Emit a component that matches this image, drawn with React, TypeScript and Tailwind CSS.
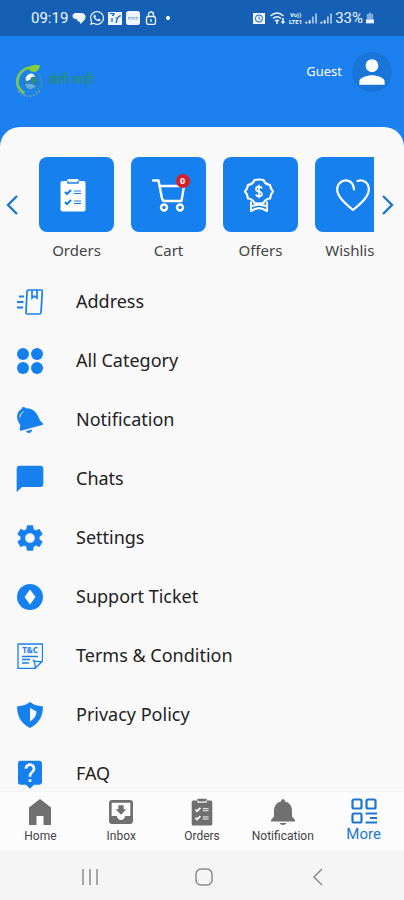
import type React from "react"
import { FaWhatsapp } from "react-icons/fa"
import { MdChatBubble, MdLiveHelp, MdMoveToInbox, MdPerson, MdSettings } from "react-icons/md"

type IconProps = { className?: string }

function ClipboardIcon({ className, mark }: IconProps & { mark: string }) {
  return (
    <svg viewBox="0 0 26 34" className={className} fill="currentColor" aria-hidden="true">
      <path d="M2.500 3H7V2.500Q7 1 9 1h8q2 0 2 1.500V3h4.500Q25.500 3 25.500 5v26.500q0 2-2 2h-21q-2 0-2-2V5q0-2 2-2z" />
      <path d="M8 3v2h10V3" fill="none" stroke={mark} strokeWidth="1.400" />
      <path d="M5 14l2 2 4-4M5 24l2 2 4-4" fill="none" stroke={mark} strokeWidth="2.200" />
      <path d="M14 13h7M14 15.500h7M14 23h7M14 25.500h7" stroke={mark} strokeWidth="1.200" />
    </svg>
  )
}

function CartIcon({ className }: IconProps) {
  return (
    <svg viewBox="0 0 34 34" className={className} fill="none" stroke="currentColor" strokeWidth="2.400" aria-hidden="true">
      <path d="M1 2.500h5.500L10 20.500q.4 2.500 3 2.500h16M8 8h24l-2.500 15H12" strokeLinecap="round" strokeLinejoin="round" />
      <circle cx="12" cy="29.500" r="3" />
      <circle cx="28" cy="29.500" r="3" />
    </svg>
  )
}

function OfferIcon({ className }: IconProps) {
  return (
    <svg viewBox="0 0 30 34" className={className} fill="none" stroke="currentColor" strokeWidth="2.200" strokeLinejoin="round" aria-hidden="true">
      <path d="M10.500 2Q15 1 19.500 2q1.800 4.400 6.500 5 .6 4 3 6.500-2.400 2.500-3 7-4.700.4-6.500 4.500-4.500 1-9 0-1.800-4.100-6.500-4.500-.6-4.500-3-7 2.400-2.500 3-6.500 4.700-.6 6.500-5z" />
      <path d="M7 23.500V33l4-2 4-1 4 1 4 2v-9.500M8 28l7-1.500 7 1.500" strokeWidth="2" />
      <path d="M18 10.500q-.7-1.800-3-1.800-3 0-3 2.300 0 2 3 2.500t3 2.600q0 2.300-3 2.300-2.500 0-3.200-2M15 6.800v13.500" strokeWidth="1.700" />
    </svg>
  )
}

function WishIcon({ className }: IconProps) {
  return (
    <svg viewBox="0 0 34 32" className={className} fill="none" stroke="currentColor" strokeWidth="2.200" strokeLinecap="round" strokeLinejoin="round" aria-hidden="true">
      <path d="M18 10.500Q17.500 4.500 13.500 2.300C8-.5 1.200 3.500 1.200 10.500 1.200 17 7.500 23 17 31c9.500-8 15.800-14 15.800-20.500C32.800 3.500 27 .2 21.500 2" />
    </svg>
  )
}

function AddressIcon({ className }: IconProps) {
  return (
    <svg viewBox="0 0 26 26" className={className} fill="none" stroke="currentColor" strokeWidth="1.700" aria-hidden="true">
      <path d="M11.500 1H24q1.500 0 1.300 1.500L24 23.500Q23.800 25 22.300 25H10.500Q9 25 9 23.500L10 2.500Q10 1 11.500 1z" />
      <path d="M15 1v8l2.500-2L20 9V1" />
      <path d="M2 7.500h5M0 13h6.500M0 18.500h6" strokeWidth="2" />
    </svg>
  )
}

function CategoryIcon({ className }: IconProps) {
  return (
    <svg viewBox="0 0 26 26" className={className} fill="currentColor" aria-hidden="true">
      <circle cx="6" cy="6" r="6" />
      <circle cx="20" cy="6" r="6" />
      <circle cx="6" cy="20" r="6" />
      <circle cx="20" cy="20" r="6" />
    </svg>
  )
}

function TiltedBellIcon({ className }: IconProps) {
  return (
    <svg viewBox="0 0 26 26" className={className} fill="currentColor" aria-hidden="true">
      <path d="M4.500 2Q4.800 0 6.500 0 8 0 8.700 1.200 16 1.200 19.500 6.500 21.500 9.500 23 13.500L26 16.500q.2 1.200-.8 1.600L4 23.800q-1.600.2-1.300-1.500L3.300 18Q-.5 13 .1 9 .8 4.200 4.500 2z" />
      <path d="M9 24l6-1.600q-.2 3.300-3 3.500-2.200.2-3-1.900z" />
      <path d="M2.800 10.500Q3 6.500 6.500 4.500" fill="none" stroke="white" strokeWidth=".9" />
    </svg>
  )
}

function TicketIcon({ className }: IconProps) {
  return (
    <svg viewBox="0 0 26 26" className={className} aria-hidden="true">
      <circle cx="13" cy="13" r="13" fill="currentColor" />
      <path d="M13 5.500l5.500 7.500-5.500 7.500L7.500 13z" fill="white" />
    </svg>
  )
}

function TermsIcon({ className }: IconProps) {
  return (
    <svg viewBox="0 0 26 26" className={className} fill="none" stroke="currentColor" strokeWidth="1.300" aria-hidden="true">
      <path d="M1 1h24.500v17l-7.500 7.500H1zM25.500 18q-4 1.500-9-.5 2.500 4 1.500 8" />
      <path d="M5 13.500h16M5 16.500h8M5 20h7" />
      <text x="13" y="10" textAnchor="middle" fill="currentColor" stroke="none" fontSize="8" fontWeight="700" fontFamily="Noto Sans, sans-serif">T&amp;C</text>
    </svg>
  )
}

function ShieldIcon({ className }: IconProps) {
  return (
    <svg viewBox="0 0 26 26" className={className} aria-hidden="true">
      <path d="M13 0q4 3.500 13 4.500 0 15-13 21.500Q0 19.500 0 4.500 9 3.500 13 0z" fill="currentColor" />
      <path d="M13 6l6.500 3.500q0 6-6.500 10z" fill="white" />
    </svg>
  )
}

function HomeIcon({ className }: IconProps) {
  return (
    <svg viewBox="0 0 24 26" className={className} fill="currentColor" aria-hidden="true">
      <path d="M12 0l11 8.500V26h-7.500v-9h-7v9H1V8.500z" />
    </svg>
  )
}

function BellIcon({ className }: IconProps) {
  return (
    <svg viewBox="0 0 24 26" className={className} fill="currentColor" aria-hidden="true">
      <path d="M10 2.500Q10 0 12 0t2 2.500Q20.500 4 21 11v6.500L24 21v1.500H0V21l3-3.500V11q.5-7 7-8.500z" />
      <path d="M8.500 24h7q-1 2-3.500 2t-3.500-2z" />
    </svg>
  )
}

function MoreIcon({ className }: IconProps) {
  return (
    <svg viewBox="0 0 26 26" className={className} fill="none" stroke="currentColor" strokeWidth="2.200" aria-hidden="true">
      <rect x="1.500" y="1.500" width="9" height="9" rx="1.500" />
      <rect x="15.500" y="1.500" width="9" height="9" rx="1.500" />
      <rect x="1.500" y="15.500" width="9" height="9" rx="1.500" />
      <path d="M14.500 15.500H26M19 20h7M14.500 24.500H26" strokeWidth="1.800" />
    </svg>
  )
}

function Chevron({ className }: IconProps) {
  return (
    <svg viewBox="0 0 12 20" className={className} fill="none" stroke="currentColor" strokeWidth="2.400" aria-hidden="true">
      <path d="M11 1L2 10l9 9" />
    </svg>
  )
}

function Signal() {
  return (
    <svg viewBox="0 0 13 12" className="h-3 w-3" stroke="currentColor" strokeWidth="2" aria-hidden="true">
      <path d="M1.500 12v-2M5 12V8.500" />
      <path d="M8.500 12V4.500M12 12V1" opacity=".65" />
    </svg>
  )
}

function StatusBar() {
  return (
    <div className="flex h-9 shrink-0 items-center justify-between bg-[#1560b5] pr-[30px] pl-[31px] font-[Roboto,sans-serif] text-[15px] text-blue-50">
      <div className="flex items-center gap-1">
        <span>09:19</span>
        <svg viewBox="0 0 14 14" className="h-3.5 w-3.5" fill="currentColor" aria-hidden="true">
          <path d="M3.500 2h6q3.500 0 4 3.500.2 2.500-1.500 4L8.500 13l-1-2.500H6L4.500 8H3Q.5 7.500.5 5t3-3z" />
        </svg>
        <FaWhatsapp className="h-4 w-3.5" />
        <svg viewBox="0 0 14 14" className="h-3.5 w-3.5" aria-hidden="true">
          <path d="M0 1h14v13H0z" fill="currentColor" />
          <path d="M2 2.500h4q0 2-2 2M8 12l1.500-5H7.500M10 7q.5-2.500 3-2M4 7v4" fill="none" stroke="#1560b5" strokeWidth="1.200" />
        </svg>
        <svg viewBox="0 0 14 14" className="h-3.5 w-3.5" aria-hidden="true">
          <rect width="14" height="14" rx="2.500" fill="currentColor" />
          <path d="M2 6.500h10M2 8h10" stroke="#7fa3cd" strokeWidth="1" strokeDasharray="2 .6" />
        </svg>
        <svg viewBox="0 0 14 14" className="h-3.5 w-3.5" fill="none" stroke="currentColor" strokeWidth="1.300" aria-hidden="true">
          <rect x="2.500" y="5.500" width="9" height="8" rx="2" />
          <path d="M4.500 5.500V3.500q0-2.500 2.500-2.500t2.500 2.500v2M7 8v3" />
        </svg>
        <span className="ml-1 h-1 w-1 rounded-full bg-white" />
      </div>
      <div className="flex items-center gap-[3px]">
        <svg viewBox="0 0 12 12" className="mr-0.5 h-3 w-3" aria-hidden="true">
          <path d="M0 1h12v11H0z" fill="currentColor" />
          <circle cx="6" cy="6.500" r="3.600" fill="none" stroke="#1560b5" />
          <path d="M6 4.500v2.300l1.500 1" fill="none" stroke="#1560b5" />
        </svg>
        <svg viewBox="0 0 16 12" className="h-3 w-4" fill="none" stroke="currentColor" strokeWidth="1.500" aria-hidden="true">
          <path d="M.5 4q6.500-6 13 0M3 6.500q4-3.500 8 0M5 9q2-1.500 4 0" />
          <path d="M7 9v3M13 6v5M11.500 9.500L13 11l1.500-1.500" />
        </svg>
        <span className="flex flex-col items-center text-[6px] leading-[7px] font-bold">
          <span>Vo))</span>
          <span>LTE1</span>
        </span>
        <Signal />
        <Signal />
        <span>33%</span>
        <svg viewBox="0 0 9 12" className="h-3 w-2" fill="currentColor" aria-hidden="true">
          <path d="M3 0h3v1.500h2V7H1V1.500h2z" opacity=".5" />
          <path d="M0 7.500h9V12H0z" />
        </svg>
      </div>
    </div>
  )
}

function Logo() {
  return (
    <div className="flex items-center gap-1">
      <svg viewBox="0 0 28 34" className="h-[34px] w-7" fill="none" aria-hidden="true">
        <path d="M20 5Q13 1.500 7 6.500.5 12 1.500 20q1 6 7 9" stroke="#7cc653" strokeWidth="2.800" />
        <path d="M12 3.500Q17-.5 24 1.500q-1 6-6 6.500-4 0-6-4.500z" fill="#84ce3a" />
        <circle cx="14.500" cy="17.500" r="8" fill="#257fc4" />
        <path d="M9.500 14q2-5 7-4.500l3 3-4 .5-1.500 3-4 1z" fill="#e8f6ee" />
        <path d="M16 14l5 1-1.500 4-3-1z" fill="#2c9162" />
        <path d="M9 20q5-1.500 11 2-3 4-7 3-3-1-4-5z" fill="#62acd5" />
        <path d="M22 9q5 5 3.500 11-1 5-6 8" stroke="#3b91a1" strokeWidth="1.400" />
        <path d="M2.500 27q11 11 22-1" stroke="#5d9fb0" strokeWidth="2.200" strokeDasharray="1.800 1.400" />
      </svg>
      <span className="font-['Noto_Sans_Devanagari','Noto_Sans',sans-serif] text-[12px] font-bold whitespace-nowrap text-[#258a94]">खेती बाड़ी</span>
    </div>
  )
}

interface TileProps {
  label: string
  children: React.ReactNode
}

function Tile({ label, children }: TileProps) {
  return (
    <button type="button" className="flex w-[75px] shrink-0 flex-col items-center gap-2">
      <span className="flex h-[75px] w-full items-center justify-center rounded-lg bg-[#1780ef] text-white">{children}</span>
      <span className="text-[15px] leading-5 text-[#444]">{label}</span>
    </button>
  )
}

const menu = [
  { label: "Address", icon: <AddressIcon className="h-[26px] w-[26px]" /> },
  { label: "All Category", icon: <CategoryIcon className="h-[26px] w-[26px]" /> },
  { label: "Notification", icon: <TiltedBellIcon className="h-[26px] w-[26px]" /> },
  { label: "Chats", icon: <MdChatBubble className="h-8 w-8" /> },
  { label: "Settings", icon: <MdSettings className="h-8 w-8" /> },
  { label: "Support Ticket", icon: <TicketIcon className="h-[26px] w-[26px]" /> },
  { label: "Terms & Condition", icon: <TermsIcon className="h-[26px] w-[26px]" /> },
  { label: "Privacy Policy", icon: <ShieldIcon className="h-[26px] w-[26px]" /> },
  { label: "FAQ", icon: <MdLiveHelp className="h-8 w-8" /> },
]

const tabs = [
  { label: "Home", icon: <HomeIcon className="h-[26px] w-6" /> },
  { label: "Inbox", icon: <MdMoveToInbox className="h-8 w-8" /> },
  { label: "Orders", icon: <ClipboardIcon className="h-7 w-[22px]" mark="#fafafa" /> },
  { label: "Notification", icon: <BellIcon className="h-[26px] w-6" /> },
]

export default function App() {
  return (
    <div className="flex h-screen flex-col overflow-hidden bg-[#1c80f0] font-['Noto_Sans',sans-serif]">
      <StatusBar />
      <header className="flex h-[91px] shrink-0 items-start justify-between pt-4 pr-3 pl-4">
        <div className="pt-3">
          <Logo />
        </div>
        <a href="#profile" className="flex items-center gap-2.5 text-[13px] text-white">
          Guest
          <span className="flex h-10 w-10 items-center justify-center rounded-full bg-[#1976d8]">
            <MdPerson className="h-[38px] w-[38px]" />
          </span>
        </a>
      </header>

      <main className="flex min-h-0 flex-1 flex-col overflow-hidden rounded-t-[20px] bg-[#f9f9f9] pt-[30px]">
        <section className="flex shrink-0 items-start">
          <button type="button" aria-label="Previous" className="flex h-24 w-[39px] shrink-0 items-center pl-1.5 text-[#1c76c9]">
            <Chevron className="h-5 w-3" />
          </button>
          <div className="flex min-w-0 flex-1 gap-[17px] overflow-hidden">
            <Tile label="Orders">
              <ClipboardIcon className="mr-2 h-[34px] w-[26px]" mark="#1780ef" />
            </Tile>
            <Tile label="Cart">
              <span className="relative">
                <CartIcon className="h-[34px] w-[34px]" />
                <span className="absolute -top-1 -right-1 flex h-3.5 w-3.5 items-center justify-center rounded-full bg-[#d61f26] text-[9px] font-bold">0</span>
              </span>
            </Tile>
            <Tile label="Offers">
              <OfferIcon className="mr-1 h-[34px] w-[30px]" />
            </Tile>
            <Tile label="Wishlist">
              <WishIcon className="h-8 w-[34px]" />
            </Tile>
          </div>
          <button type="button" aria-label="Next" className="flex h-24 w-[30px] shrink-0 items-center pl-2 text-[#1c76c9]">
            <Chevron className="h-5 w-3 rotate-180" />
          </button>
        </section>

        <ul className="mt-3 min-h-0 flex-1 overflow-hidden">
          {menu.map((item) => (
            <li key={item.label}>
              <a href="#menu" className="flex h-[59px] items-center gap-[30px] pl-3.5 text-[18px] text-[#222]">
                <span className="flex w-8 justify-center text-[#1780ef]">{item.icon}</span>
                {item.label}
              </a>
            </li>
          ))}
        </ul>
      </main>

      <nav className="grid h-[59px] shrink-0 grid-cols-5 border-t border-gray-100 bg-[#fcfcfc] font-[Roboto,sans-serif]">
        {tabs.map((tab) => (
          <a key={tab.label} href="#tab" className="flex flex-col items-center pt-1 text-[12px] leading-4 text-[#444]">
            <span className="flex h-8 items-center text-[#707070]">{tab.icon}</span>
            {tab.label}
          </a>
        ))}
        <a href="#more" className="flex flex-col items-center pt-1 text-[15px] leading-4 text-[#1c76d0]">
          <span className="flex h-[30px] items-center">
            <MoreIcon className="h-[26px] w-[26px]" />
          </span>
          More
        </a>
      </nav>

      <div className="flex h-[50px] shrink-0 items-center justify-center gap-[96px] bg-[#f5f5f5] pt-1 pl-1 text-[#8a8a8a]">
        <button type="button" aria-label="Recent apps">
          <svg viewBox="0 0 18 18" className="h-[18px] w-[18px]" stroke="currentColor" strokeWidth="1.500" aria-hidden="true">
            <path d="M2 1v16M9 1v16M16 1v16" />
          </svg>
        </button>
        <button type="button" aria-label="Home screen">
          <svg viewBox="0 0 18 18" className="h-[18px] w-[18px]" fill="none" stroke="currentColor" strokeWidth="1.500" aria-hidden="true">
            <rect x="1" y="1" width="16" height="16" rx="5" />
          </svg>
        </button>
        <button type="button" aria-label="Back">
          <svg viewBox="0 0 18 18" className="h-[18px] w-[18px]" fill="none" stroke="currentColor" strokeWidth="1.500" aria-hidden="true">
            <path d="M13 1L5 9l8 8" />
          </svg>
        </button>
      </div>
    </div>
  )
}
